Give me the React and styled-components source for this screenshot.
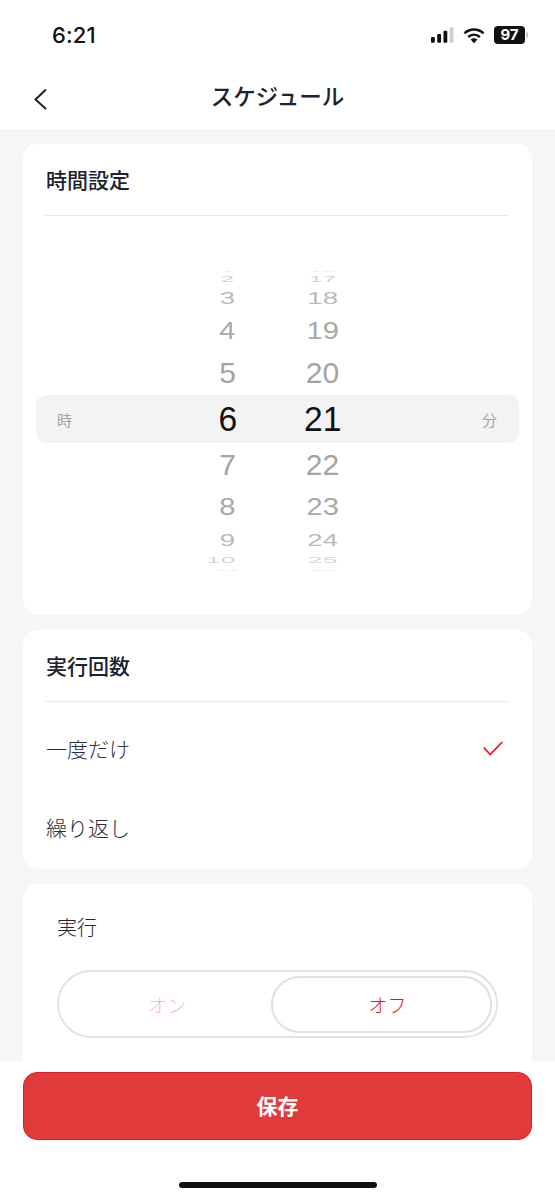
import React from "react";
import styled, { createGlobalStyle } from "styled-components";

const JP = `"Inter", "Noto Sans CJK JP", sans-serif`;

const GlobalStyle = createGlobalStyle`
  html, body {
    margin: 0;
    padding: 0;
    background: #fff;
  }
  * {
    box-sizing: border-box;
  }
`;

const Page = styled.div`
  width: 555px;
  height: 1200px;
  display: flex;
  flex-direction: column;
  overflow: hidden;
  background: #fff;
  font-family: ${JP};
  color: #1c2230;
`;

const StatusBar = styled.div`
  height: 70px;
  flex: none;
  display: flex;
  align-items: center;
  justify-content: space-between;
  padding: 0 30px 0 52px;
`;

const Clock = styled.div`
  font-size: 22px;
  font-weight: 500;
  color: #111;
  letter-spacing: 0.1px;
`;

const StatusIcons = styled.div`
  display: flex;
  align-items: center;
  gap: 9px;
`;

const Battery = styled.div`
  width: 31px;
  height: 18px;
  border-radius: 4px;
  background: #111;
  color: #fff;
  font-size: 15px;
  font-weight: 700;
  line-height: 18px;
  text-align: center;
  position: relative;
  &::after {
    content: "";
    position: absolute;
    right: -3px;
    top: 6px;
    width: 2px;
    height: 6px;
    border-radius: 0 2px 2px 0;
    background: #c4c4c4;
  }
`;

const NavBar = styled.div`
  height: 59px;
  flex: none;
  display: flex;
  align-items: center;
  justify-content: center;
  position: relative;
`;

const BackIcon = styled.svg`
  position: absolute;
  left: 32px;
  top: 17px;
`;

const Title = styled.div`
  font-size: 22.5px;
  font-weight: 500;
  line-height: 1;
  margin-top: -5px;
  color: #1c2230;
`;

const Content = styled.div`
  flex: 1;
  min-height: 0;
  overflow: hidden;
  background: #f5f7f6;
  padding: 15px 23px 0;
  display: flex;
  flex-direction: column;
  gap: 15px;
`;

const Card = styled.section`
  flex: none;
  background: #fff;
  border-radius: 15px;
  height: ${(p) => p.$height}px;
  padding: ${(p) => p.$padding || "0 23px 0 22px"};
`;

const CardHeader = styled.div`
  height: 72px;
  display: flex;
  align-items: center;
  padding: 0 1px 1px;
  border-bottom: 1px solid #e8e9e9;
  font-size: 21px;
  font-weight: 500;
  color: #1c2230;
`;

const Wheel = styled.div`
  position: relative;
  margin: 54px -10px 0 -9px;
  height: 298px;
`;

const Band = styled.div`
  position: absolute;
  left: 0;
  right: 0;
  top: 125px;
  height: 48px;
  border-radius: 10px;
  background: #f3f3f3;
  display: flex;
  align-items: center;
  justify-content: space-between;
  padding: 0 22px 0 21px;
  font-size: 15px;
  color: #a3a3a3;
`;

const Columns = styled.div`
  position: relative;
  display: flex;
  justify-content: center;
  padding-right: 5px;
  height: 100%;
`;

const Column = styled.div`
  width: 95px;
  display: flex;
  flex-direction: column;
  align-items: center;
`;

const Digit = styled.div`
  height: ${(p) => p.$h}px;
  flex: none;
  display: flex;
  align-items: center;
  justify-content: center;
  white-space: nowrap;
  margin-right: ${(p) => p.$shift || 0}px;
  font-family: "Liberation Sans", sans-serif;
  font-size: ${(p) => (p.$active ? 32 : 30)}px;
  color: ${(p) => (p.$active ? "#111" : "#a4a4a4")};
  opacity: ${(p) => p.$o};
  transform: scale(${(p) => p.$sx}, ${(p) => p.$sy});
`;

const OptionRow = styled.div`
  height: ${(p) => p.$height}px;
  display: flex;
  align-items: center;
  justify-content: space-between;
  padding: 0 6px 2px 1px;
  font-size: 21px;
  font-weight: 300;
  color: #2a2f3a;
`;

const ExecLabel = styled.div`
  padding-top: 31px;
  font-size: 20px;
  line-height: 26px;
  font-weight: 300;
  color: #1c2230;
`;

const Toggle = styled.div`
  margin-top: 29px;
  width: 441px;
  height: 68px;
  border: 2px solid #e2e2e2;
  border-radius: 34px;
  padding: 4px 4px 3px 0;
  display: flex;
`;

const ToggleOption = styled.div`
  flex: ${(p) => (p.$selected ? "none" : 1)};
  width: ${(p) => (p.$selected ? "221px" : "auto")};
  display: flex;
  align-items: center;
  justify-content: center;
  border-radius: 29px;
  border: ${(p) => (p.$selected ? "2px solid #e0e0e0" : "none")};
  padding-left: ${(p) => (p.$selected ? 12 : 4)}px;
  font-size: 19px;
  font-weight: 300;
  color: ${(p) => (p.$selected ? "#ee0f1a" : "#fdbcbc")};
`;

const Footer = styled.div`
  flex: none;
  height: 139px;
  background: #fff;
  padding: 11px 23px 0;
  position: relative;
`;

const SaveButton = styled.button`
  width: 100%;
  height: 68px;
  border: 1px solid #d8202a;
  border-radius: 14px;
  background: #e03a3a;
  color: #fff;
  font-family: ${JP};
  font-size: 21px;
  font-weight: 700;
  padding: 0 0 2px;
`;

const HomeBar = styled.div`
  position: absolute;
  left: 179px;
  bottom: 12px;
  width: 198px;
  height: 6px;
  border-radius: 3px;
  background: #111;
`;

const hours = [
  { v: "1", h: 2, sx: 0.8, sy: 0.08, o: 0.3 },
  { v: "2", h: 14, sx: 0.8, sy: 0.32, o: 0.5 },
  { v: "3", h: 24, sx: 0.92, sy: 0.58, o: 0.75 },
  { v: "4", h: 42, sx: 0.97, sy: 0.8, o: 0.95 },
  { v: "5", h: 42, sx: 1, sy: 1, o: 1 },
  { v: "6", h: 50, sx: 1.05, sy: 1.1, o: 1, active: true },
  { v: "7", h: 42, sx: 1, sy: 1, o: 1 },
  { v: "8", h: 42, sx: 0.97, sy: 0.8, o: 0.95 },
  { v: "9", h: 24, sx: 0.92, sy: 0.58, o: 0.75 },
  { v: "10", h: 16, sx: 0.88, sy: 0.3, o: 0.45, shift: 13 },
  { v: "11", h: 4, sx: 0.8, sy: 0.08, o: 0.3 },
];

const minutes = hours.map((row, i) => ({ ...row, v: String(16 + i), shift: 0 }));

const BackArrow = () => (
  <BackIcon width="18" height="24" viewBox="0 0 18 24" fill="none">
    <path d="M14 2.5 3.5 12.5 14 22" stroke="#1c2230" strokeWidth="2" />
  </BackIcon>
);

const SignalIcon = () => (
  <svg width="23" height="16" viewBox="0 0 24 16">
    <rect x="0" y="10" width="4" height="6" rx="1" fill="#111" />
    <rect x="6.5" y="7" width="4" height="9" rx="1" fill="#111" />
    <rect x="13" y="3.5" width="4" height="12.5" rx="1" fill="#111" />
    <rect x="19.5" y="0" width="4" height="16" rx="1" fill="#cfcfcf" />
  </svg>
);

const WifiIcon = () => (
  <svg width="22" height="17" viewBox="0 0 23 17" fill="none">
    <path d="M1.5 6.2C7.3 .8 15.7 .8 21.5 6.2" stroke="#111" strokeWidth="2.6" />
    <path d="M5.4 10C9 6.9 14 6.9 17.6 10" stroke="#111" strokeWidth="2.6" />
    <path d="M8 12.6C10.2 11 12.8 11 15 12.6L11.5 16.5Z" fill="#111" />
  </svg>
);

const CheckIcon = () => (
  <svg width="20" height="15" viewBox="0 0 20 15" fill="none">
    <path d="M.8 6.5 7.2 13.5 19.2 1" stroke="#e8101c" strokeWidth="1.7" />
  </svg>
);

const PickerColumn = ({ rows }) => (
  <Column>
    {rows.map((row) => (
      <Digit
        key={row.v}
        $h={row.h}
        $sx={row.sx}
        $sy={row.sy}
        $o={row.o}
        $shift={row.shift}
        $active={row.active}
      >
        {row.v}
      </Digit>
    ))}
  </Column>
);

export default function App() {
  return (
    <Page>
      <GlobalStyle />
      <StatusBar>
        <Clock>6:21</Clock>
        <StatusIcons>
          <SignalIcon />
          <WifiIcon />
          <Battery>97</Battery>
        </StatusIcons>
      </StatusBar>
      <NavBar>
        <BackArrow />
        <Title>スケジュール</Title>
      </NavBar>
      <Content>
        <Card $height={471}>
          <CardHeader>時間設定</CardHeader>
          <Wheel>
            <Band>
              <span>時</span>
              <span>分</span>
            </Band>
            <Columns>
              <PickerColumn rows={hours} />
              <PickerColumn rows={minutes} />
            </Columns>
          </Wheel>
        </Card>
        <Card $height={239}>
          <CardHeader>実行回数</CardHeader>
          <OptionRow $height={94}>
            一度だけ
            <CheckIcon />
          </OptionRow>
          <OptionRow $height={64}>繰り返し</OptionRow>
        </Card>
        <Card $height={260} $padding="0 34px">
          <ExecLabel>実行</ExecLabel>
          <Toggle>
            <ToggleOption>オン</ToggleOption>
            <ToggleOption $selected>オフ</ToggleOption>
          </Toggle>
        </Card>
      </Content>
      <Footer>
        <SaveButton>保存</SaveButton>
        <HomeBar />
      </Footer>
    </Page>
  );
}
